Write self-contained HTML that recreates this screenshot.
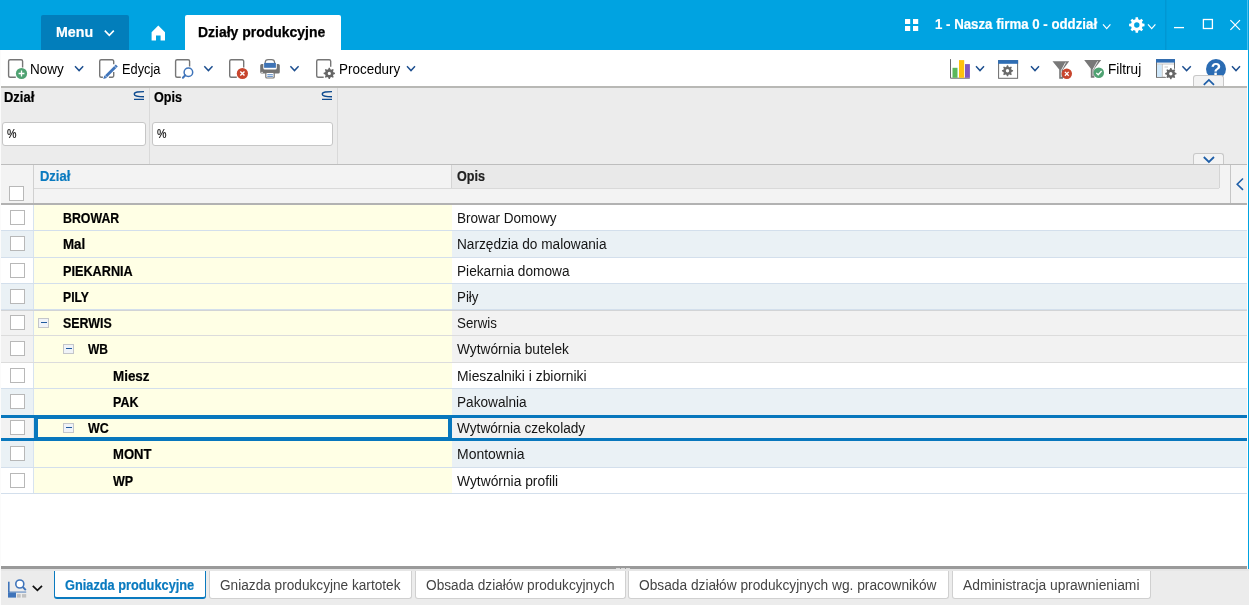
<!DOCTYPE html>
<html lang="pl">
<head>
<meta charset="utf-8">
<title>Działy produkcyjne</title>
<style>
*{box-sizing:border-box;margin:0;padding:0}
html,body{width:1249px;height:605px;overflow:hidden;background:#fff}
body{will-change:transform;position:relative;font-family:"Liberation Sans",sans-serif;font-size:13px;color:#000}
.abs{position:absolute}
#hdr{left:0;top:0;width:1249px;height:50px;background:#00a3e1}
#menu{left:41px;top:15px;width:88px;height:35px;background:#027ebb;border-radius:2px 2px 0 0;color:#fff;font-weight:bold;font-size:15px}
#menu span{-webkit-text-stroke:0.2px;position:absolute;left:14.7px;top:8px;white-space:nowrap}
#tab{left:185px;top:15px;width:156px;height:35px;background:#fff;border-radius:2px 2px 0 0;font-weight:bold;font-size:14px}
#tab span{-webkit-text-stroke:0.25px #000;position:absolute;left:13.4px;top:9px;white-space:nowrap}
#firm{-webkit-text-stroke:0.2px;left:935px;top:16px;color:#fff;font-weight:bold;font-size:14px;white-space:nowrap}
#tb{left:0;top:50px;width:1249px;height:36px;background:#fff}
#tbline{left:0;top:86px;width:1249px;height:2px;background:#b8b8b5}
.tbt{position:absolute;top:61px;font-size:14px;white-space:nowrap;color:#000}
#fp{left:0;top:88px;width:1249px;height:76px;background:#ececec}
#fpline{left:0;top:164px;width:1249px;height:1px;background:#bdbdbd}
.fl{position:absolute;top:89px;font-weight:bold;font-size:14px;-webkit-text-stroke:0.2px;white-space:nowrap}
.fi{position:absolute;top:122px;height:24px;background:#fff;border:1px solid #c6c6c6;border-radius:3px;font-size:13px;color:#000;-webkit-text-stroke:0.15px}
.fi span{position:absolute;left:4.2px;top:3.3px;display:inline-block;transform:scaleX(.82);transform-origin:0 0}
.vsep{position:absolute;top:88px;width:1px;height:76px;background:#d9d9d9}
.sub{position:absolute;top:90px}
#gh{left:0;top:165px;width:1249px;height:39px;background:#f3f3f3}
#ghline{left:0;top:203px;width:1249px;height:2px;background:#b2b2b2}
.cb{position:absolute;width:15px;height:15px;background:#fff;border:1px solid #b8b8b8}
.row{position:absolute;left:0;width:1249px;height:26px}
.row .c0{position:absolute;left:0;top:0;width:34px;height:100%;border-right:1px solid #d7e3f0}
.row .c1{position:absolute;left:34px;top:0;width:418px;height:100%;background:#ffffe5;font-weight:bold;font-size:14px;-webkit-text-stroke:0.2px}
.row .c2{position:absolute;left:452px;top:0;width:797px;height:100%;font-size:14px}
.row .c1 span,.row .c2 span{position:absolute;top:5px;white-space:nowrap}
.row .c2 span{left:4.8px;top:5px;color:#151515}
.rl{position:absolute;left:0;width:1249px;height:1px;background:#d3dfec}
.w .c0,.w .c2{background:#fff}
.b .c0,.b .c2{background:#eaf1f5}
.g .c0,.g .c2{background:#f2f2f2}
.exp{position:absolute;width:11px;height:10px;border:1px solid #c4c6ca;background:#f0f3f8}
.exp:after{content:"";position:absolute;left:2px;top:3px;width:6px;height:1px;background:#1f5a9e}
#bb{left:0;top:569px;width:1249px;height:36px;background:#ececec}
#bbline{left:0;top:566px;width:1249px;height:3px;background:#9a9a9a}
.bt{position:absolute;top:571px;height:28px;background:#fff;border:1px solid #d0d0d0;border-top:none;border-radius:0 0 3px 3px;font-size:14px;color:#444;white-space:nowrap}
.bt span{position:absolute;left:10px;top:6px}
.bt.act{border:1px solid #0a7abf;border-top:none;border-bottom-width:2px;color:#0a7abf;font-weight:bold;font-size:14px;-webkit-text-stroke:0.2px}
.bt.act span{top:6px}
.ctab{position:absolute;left:1193px;width:31px;height:11px;background:#f3f3f3;border:1px solid #c8c8c8;border-bottom:none;border-radius:3px 3px 0 0}
</style>
</head>
<body>
<div id="hdr" class="abs"></div>
<div id="menu" class="abs"><span style="display:inline-block;transform-origin:0 0;transform:scaleX(0.9471)">Menu</span></div>
<div id="tab" class="abs"><span style="display:inline-block;transform-origin:0 0;transform:scaleX(0.9969)">Działy produkcyjne</span></div>
<div id="firm" class="abs" style="display:inline-block;transform-origin:0 0;transform:scaleX(0.947)">1 - Nasza firma 0 - oddział</div>
<svg class="abs" style="left:0;top:0" width="1249" height="50" viewBox="0 0 1249 50"><path d="M104.80 30.60 L109.30 35.40 L113.80 30.60" fill="none" stroke="#fff" stroke-width="1.6"/>
<path d="M158.3 25.6 L165 32.2 V40.6 H160.6 V35.4 H156 V40.6 H151.6 V32.2 Z" fill="#fff"/>
<rect x="905" y="19" width="5.2" height="5" fill="#fff"/>
<rect x="913" y="19" width="5.2" height="5" fill="#fff"/>
<rect x="905" y="26" width="5.2" height="5" fill="#fff"/>
<rect x="913" y="26" width="5.2" height="5" fill="#fff"/>
<path d="M1103.00 24.40 L1106.70 28.60 L1110.40 24.40" fill="none" stroke="#fff" stroke-width="1.2"/>
<path d="M1142.54 23.62 L1144.50 23.78 L1144.50 26.22 L1142.54 26.38 L1141.83 28.08 L1143.11 29.58 L1141.38 31.31 L1139.88 30.03 L1138.18 30.74 L1138.02 32.70 L1135.58 32.70 L1135.42 30.74 L1133.72 30.03 L1132.22 31.31 L1130.49 29.58 L1131.77 28.08 L1131.06 26.38 L1129.10 26.22 L1129.10 23.78 L1131.06 23.62 L1131.77 21.92 L1130.49 20.42 L1132.22 18.69 L1133.72 19.97 L1135.42 19.26 L1135.58 17.30 L1138.02 17.30 L1138.18 19.26 L1139.88 19.97 L1141.38 18.69 L1143.11 20.42 L1141.83 21.92Z M1139.50 25.00 A2.7 2.7 0 1 0 1134.10 25.00 A2.7 2.7 0 1 0 1139.50 25.00Z" fill="#fff" fill-rule="evenodd"/>
<path d="M1148.00 24.40 L1151.70 28.60 L1155.40 24.40" fill="none" stroke="#fff" stroke-width="1.2"/>
<rect x="1165" y="0" width="1.5" height="50" fill="#0097d3"/>
<path d="M1174 27.6 H1184" stroke="#fff" stroke-width="1.3"/>
<rect x="1203.4" y="19.5" width="9" height="9" fill="none" stroke="#fff" stroke-width="1.3"/>
<path d="M1230.4 20.2 L1240 29.8 M1240 20.2 L1230.4 29.8" stroke="#fff" stroke-width="1.2"/></svg>
<div id="tb" class="abs"></div>
<div class="tbt" style="left:30px;display:inline-block;transform-origin:0 0;transform:scaleX(0.9653)">Nowy</div>
<div class="tbt" style="left:122px;display:inline-block;transform-origin:0 0;transform:scaleX(0.9136)">Edycja</div>
<div class="tbt" style="left:338.6px;display:inline-block;transform-origin:0 0;transform:scaleX(0.9606)">Procedury</div>
<div class="tbt" style="left:1107.7px;display:inline-block;transform-origin:0 0;transform:scaleX(0.9698)">Filtruj</div>
<svg class="abs" style="left:0;top:0" width="1249" height="90" viewBox="0 0 1249 90"><path d="M22.6 67.6 V61.25 a1.5 1.5 0 0 0 -1.5 -1.5 H10.1 a1.5 1.5 0 0 0 -1.5 1.5 V75.8 a1.5 1.5 0 0 0 1.5 1.5 H15.8" fill="none" stroke="#767676" stroke-width="1.4"/>
<circle cx="21.5" cy="73.5" r="5.6" fill="#4fa272"/><path d="M18.6 73.5 H24.4 M21.5 70.6 V76.4" stroke="#fff" stroke-width="1.3" fill="none"/>
<path d="M75.00 66.30 L79.10 70.60 L83.20 66.30" fill="none" stroke="#1c4e8f" stroke-width="1.45"/>
<path d="M113.7 64.2 V61.25 a1.5 1.5 0 0 0 -1.5 -1.5 H101.2 a1.5 1.5 0 0 0 -1.5 1.5 V75.8 a1.5 1.5 0 0 0 1.5 1.5 H102.9" fill="none" stroke="#767676" stroke-width="1.4"/>
<path d="M113.7 72.1 V75.8 a1.5 1.5 0 0 1 -1.5 1.5 H108.9" fill="none" stroke="#767676" stroke-width="1.4"/>
<path d="M103.3 78.9 L104.3 75.6 L106.6 77.9 Z" fill="#3f74ba"/><path d="M105.3 76.9 L116.8 65.4" stroke="#3f74ba" stroke-width="2.8" fill="none"/>
<path d="M104.6 75.0 L107.2 77.6 M114.0 65.6 L116.6 68.2" stroke="#fff" stroke-width="0.6" fill="none"/>
<path d="M189.6 66.6 V61.25 a1.5 1.5 0 0 0 -1.5 -1.5 H177.1 a1.5 1.5 0 0 0 -1.5 1.5 V75.8 a1.5 1.5 0 0 0 1.5 1.5 H180.8" fill="none" stroke="#767676" stroke-width="1.4"/>
<circle cx="188.4" cy="72.2" r="4.3" fill="#fff" stroke="#3f74ba" stroke-width="1.5"/><path d="M185.3 75.3 L182.9 77.7" stroke="#3f74ba" stroke-width="2" stroke-linecap="round"/>
<path d="M204.30 66.30 L208.40 70.60 L212.50 66.30" fill="none" stroke="#1c4e8f" stroke-width="1.45"/>
<path d="M243.7 67.6 V61.25 a1.5 1.5 0 0 0 -1.5 -1.5 H231.2 a1.5 1.5 0 0 0 -1.5 1.5 V75.8 a1.5 1.5 0 0 0 1.5 1.5 H236.8" fill="none" stroke="#767676" stroke-width="1.4"/>
<circle cx="242.4" cy="73.5" r="5.6" fill="#c8452d"/><path d="M240.3 71.4 L244.5 75.6 M244.5 71.4 L240.3 75.6" stroke="#fff" stroke-width="1.4" fill="none"/>
<path d="M265.2 63.2 V62.5 A3 3 0 0 1 268.2 59.6 H271.6 A3 3 0 0 1 274.6 62.5 V63.2" fill="#fff" stroke="#787878" stroke-width="1.2"/>
<path d="M261.7 64 H263.3 V68 a1.5 1.5 0 0 0 1.5 1.5 H275.3 a1.5 1.5 0 0 0 1.5 -1.5 V64 H278.3 a1.5 1.5 0 0 1 1.5 1.5 V72.1 a1.5 1.5 0 0 1 -1.5 1.5 H261.7 a1.5 1.5 0 0 1 -1.5 -1.5 V65.5 a1.5 1.5 0 0 1 1.5 -1.5 Z" fill="#727272"/>
<rect x="264.1" y="62.9" width="11.8" height="4.9" fill="#3e73b5"/>
<rect x="265.8" y="72.4" width="8.4" height="5.6" rx="1" fill="#fff" stroke="#757575" stroke-width="1.2"/>
<path d="M267.3 74.7 H272.9 M267.3 76.4 H272.9" stroke="#4a7fc1" stroke-width="0.9"/>
<rect x="261.3" y="71.9" width="1.5" height="0.9" fill="#fff"/>
<path d="M290.40 66.30 L294.50 70.60 L298.60 66.30" fill="none" stroke="#1c4e8f" stroke-width="1.45"/>
<path d="M330.7 66.7 V61.25 a1.5 1.5 0 0 0 -1.5 -1.5 H318.2 a1.5 1.5 0 0 0 -1.5 1.5 V75.8 a1.5 1.5 0 0 0 1.5 1.5 H323.7" fill="none" stroke="#767676" stroke-width="1.4"/>
<path d="M333.46 72.30 L334.97 72.82 L334.97 73.98 L333.46 74.50 L333.02 75.56 L333.72 77.00 L332.90 77.82 L331.46 77.12 L330.40 77.56 L329.88 79.07 L328.72 79.07 L328.20 77.56 L327.14 77.12 L325.70 77.82 L324.88 77.00 L325.58 75.56 L325.14 74.50 L323.63 73.98 L323.63 72.82 L325.14 72.30 L325.58 71.24 L324.88 69.80 L325.70 68.98 L327.14 69.68 L328.20 69.24 L328.72 67.73 L329.88 67.73 L330.40 69.24 L331.46 69.68 L332.90 68.98 L333.72 69.80 L333.02 71.24Z M330.90 73.40 A1.6 1.6 0 1 0 327.70 73.40 A1.6 1.6 0 1 0 330.90 73.40Z" fill="#666" fill-rule="evenodd"/>
<path d="M407.00 66.30 L411.00 70.60 L415.00 66.30" fill="none" stroke="#1c4e8f" stroke-width="1.45"/>
<path d="M950.5 59.1 V78.2 H969.8" fill="none" stroke="#6a6a6a" stroke-width="1"/>
<rect x="952.5" y="67.8" width="5" height="10" fill="#5cb85c"/><rect x="959" y="60.1" width="5.2" height="17.7" fill="#ffc20e"/><rect x="965" y="64.1" width="4.9" height="13.7" fill="#7e57c2"/>
<path d="M976.00 66.30 L980.00 70.60 L984.00 66.30" fill="none" stroke="#1c4e8f" stroke-width="1.45"/>
<rect x="998.6" y="60.6" width="19" height="17.7" fill="#fff" stroke="#6a6a6a" stroke-width="1"/><rect x="998.1" y="60.1" width="20" height="3.7" fill="#2e6db4"/>
<path d="M1011.56 69.72 L1013.07 70.23 L1013.07 71.37 L1011.56 71.88 L1011.13 72.91 L1011.84 74.34 L1011.04 75.14 L1009.61 74.43 L1008.58 74.86 L1008.07 76.37 L1006.93 76.37 L1006.42 74.86 L1005.39 74.43 L1003.96 75.14 L1003.16 74.34 L1003.87 72.91 L1003.44 71.88 L1001.93 71.37 L1001.93 70.23 L1003.44 69.72 L1003.87 68.69 L1003.16 67.26 L1003.96 66.46 L1005.39 67.17 L1006.42 66.74 L1006.93 65.23 L1008.07 65.23 L1008.58 66.74 L1009.61 67.17 L1011.04 66.46 L1011.84 67.26 L1011.13 68.69Z M1009.20 70.80 A1.7 1.7 0 1 0 1005.80 70.80 A1.7 1.7 0 1 0 1009.20 70.80Z" fill="#6a6a6a" fill-rule="evenodd"/>
<path d="M1031.00 66.30 L1035.00 70.60 L1039.00 66.30" fill="none" stroke="#1c4e8f" stroke-width="1.45"/>
<path d="M1052.5 61.3 H1069.2 L1063 69.5 V78.8 H1059.2 V69.5 Z" fill="#787878"/><path d="M1065.6 62.5 L1061.3 70.5 V77" stroke="#fff" stroke-width="0.8" fill="none"/>
<circle cx="1066.8" cy="73.8" r="5.2" fill="#c8452d"/><path d="M1064.9 71.9 L1068.7 75.7 M1068.7 71.9 L1064.9 75.7" stroke="#fff" stroke-width="1.3" fill="none"/>
<path d="M1084.2 60.1 H1101.2 L1094.4 68.8 V77.7 H1090.8 V68.8 Z" fill="#787878"/><path d="M1097.6 61.3 L1093 69.5 V76" stroke="#fff" stroke-width="0.8" fill="none"/>
<circle cx="1098.8" cy="72.7" r="5.25" fill="#4fa272"/><path d="M1096.3 72.9 L1098.2 74.8 L1101.6 71" stroke="#fff" stroke-width="1.3" fill="none"/>
<rect x="1156.5" y="59.6" width="18" height="17.7" fill="#fff" stroke="#6a6a6a" stroke-width="1"/><rect x="1156" y="59.1" width="19" height="3.5" fill="#2e6db4"/>
<rect x="1157" y="64.5" width="4.7" height="12.3" fill="#cfe8fb"/><path d="M1162.3 64 V77 M1157 64 H1174" stroke="#b5b5b5" stroke-width="0.8"/><path d="M1164.5 67 H1168" stroke="#c8c8c8" stroke-width="1"/>
<circle cx="1170.8" cy="73.7" r="6.3" fill="#fff"/>
<path d="M1174.96 72.60 L1176.47 73.12 L1176.47 74.28 L1174.96 74.80 L1174.52 75.86 L1175.22 77.30 L1174.40 78.12 L1172.96 77.42 L1171.90 77.86 L1171.38 79.37 L1170.22 79.37 L1169.70 77.86 L1168.64 77.42 L1167.20 78.12 L1166.38 77.30 L1167.08 75.86 L1166.64 74.80 L1165.13 74.28 L1165.13 73.12 L1166.64 72.60 L1167.08 71.54 L1166.38 70.10 L1167.20 69.28 L1168.64 69.98 L1169.70 69.54 L1170.22 68.03 L1171.38 68.03 L1171.90 69.54 L1172.96 69.98 L1174.40 69.28 L1175.22 70.10 L1174.52 71.54Z M1172.50 73.70 A1.7 1.7 0 1 0 1169.10 73.70 A1.7 1.7 0 1 0 1172.50 73.70Z" fill="#666" fill-rule="evenodd"/>
<path d="M1182.40 66.30 L1186.60 70.60 L1190.80 66.30" fill="none" stroke="#1c4e8f" stroke-width="1.45"/>
<circle cx="1216" cy="69" r="10" fill="#2b6cb3"/>
<text x="1216" y="75.2" text-anchor="middle" font-family="Liberation Sans, sans-serif" font-weight="bold" font-size="17" fill="#fff">?</text>
<path d="M1232.00 66.30 L1236.00 70.60 L1240.00 66.30" fill="none" stroke="#1c4e8f" stroke-width="1.45"/></svg>
<div class="ctab" style="top:75px"><svg class="abs" style="left:0;top:0" width="29" height="11" viewBox="0 0 29 11"><path d="M9.8 8.8 L14.9 3.9 L20 8.8" fill="none" stroke="#1f5fa8" stroke-width="1.8"/></svg></div>
<div id="tbline" class="abs"></div>
<div id="fp" class="abs"></div>
<div id="fpline" class="abs"></div>
<div class="ctab" style="top:153px"><svg class="abs" style="left:0;top:0" width="29" height="11" viewBox="0 0 29 11"><path d="M9.8 3 L14.9 7.9 L20 3" fill="none" stroke="#1f5fa8" stroke-width="1.8"/></svg></div>
<div class="vsep" style="left:149px"></div>
<div class="vsep" style="left:337px"></div>
<div class="fl" style="left:4.4px;display:inline-block;transform-origin:0 0;transform:scaleX(0.927)">Dział</div>
<div class="fl" style="left:154.4px;display:inline-block;transform-origin:0 0;transform:scaleX(0.8996)">Opis</div>
<svg class="sub" style="left:133px" width="12" height="11" viewBox="0 0 12 11"><path d="M11 1.6 C6 1.6 1.3 1.9 1.3 4.2 C1.3 6.4 6 6.7 11 6.7 M1 9.4 H11" fill="none" stroke="#0d4a8f" stroke-width="1.4"/></svg>
<svg class="sub" style="left:321.4px" width="12" height="11" viewBox="0 0 12 11"><path d="M11 1.6 C6 1.6 1.3 1.9 1.3 4.2 C1.3 6.4 6 6.7 11 6.7 M1 9.4 H11" fill="none" stroke="#0d4a8f" stroke-width="1.4"/></svg>
<div class="fi" style="left:2px;width:144px"><span>%</span></div>
<div class="fi" style="left:152px;width:181px"><span>%</span></div>
<div id="gh" class="abs"></div>
<div class="abs" style="left:452px;top:165px;width:767px;height:23px;background:#e9e9e9"></div>
<div class="abs" style="left:451px;top:165px;width:1px;height:23px;background:#d4d4d4"></div>
<div class="abs" style="left:1219px;top:165px;width:1px;height:23px;background:#d4d4d4"></div>
<div class="abs" style="left:1230px;top:165px;width:1px;height:38px;background:#c6c6c6"></div>
<svg class="abs" style="left:1234px;top:176px" width="12" height="16" viewBox="0 0 12 16"><path d="M9 2.5 L3.2 8.2 L9 13.9" fill="none" stroke="#1f5fa8" stroke-width="1.6"/></svg>
<div class="abs" style="left:33px;top:165px;width:1px;height:38px;background:#d0d0d0"></div>
<div class="abs" style="left:34px;top:188px;width:1185px;height:1px;background:#d9d9d9"></div>
<div id="ghline" class="abs"></div>
<div class="cb" style="left:9px;top:186px"></div>
<div class="abs" style="left:39.5px;top:168px;font-weight:bold;font-size:14px;-webkit-text-stroke:0.2px;color:#0a7abf;white-space:nowrap;display:inline-block;transform-origin:0 0;transform:scaleX(0.927)">Dział</div>
<div class="abs" style="left:457.3px;top:168px;font-weight:bold;font-size:14px;-webkit-text-stroke:0.2px;color:#222;white-space:nowrap;display:inline-block;transform-origin:0 0;transform:scaleX(0.8996)">Opis</div>
<div class="row w" style="top:205px;height:26px"><div class="c0"><div class="cb" style="left:10px;top:5px"></div></div><div class="c1"><span style="left:29.3px;display:inline-block;transform-origin:0 0;transform:scaleX(0.8819)">BROWAR</span></div><div class="c2"><span style="display:inline-block;transform-origin:0 0;transform:scaleX(0.9688)">Browar Domowy</span></div></div>
<div class="rl" style="top:230px;background:#d3dfec"></div>
<div class="row b" style="top:231px;height:27px"><div class="c0"><div class="cb" style="left:10px;top:5px"></div></div><div class="c1"><span style="left:29.3px;display:inline-block;transform-origin:0 0;transform:scaleX(0.9531)">Mal</span></div><div class="c2"><span style="display:inline-block;transform-origin:0 0;transform:scaleX(0.9751)">Narzędzia do malowania</span></div></div>
<div class="rl" style="top:257px;background:#d3dfec"></div>
<div class="row w" style="top:258px;height:26px"><div class="c0"><div class="cb" style="left:10px;top:5px"></div></div><div class="c1"><span style="left:29.3px;display:inline-block;transform-origin:0 0;transform:scaleX(0.9057)">PIEKARNIA</span></div><div class="c2"><span style="display:inline-block;transform-origin:0 0;transform:scaleX(0.9768)">Piekarnia domowa</span></div></div>
<div class="rl" style="top:283px;background:#d3dfec"></div>
<div class="row b" style="top:284px;height:26px"><div class="c0"><div class="cb" style="left:10px;top:5px"></div></div><div class="c1"><span style="left:29.3px;display:inline-block;transform-origin:0 0;transform:scaleX(0.8712)">PILY</span></div><div class="c2"><span style="display:inline-block;transform-origin:0 0;transform:scaleX(0.9529)">Piły</span></div></div>
<div class="rl" style="top:309px;background:#d3dfec"></div>
<div class="row g" style="top:310px;height:26px"><div class="c0"><div class="cb" style="left:10px;top:5px"></div></div><div class="c1"><div class="exp" style="left:4px;top:8px"></div><span style="left:29.3px;display:inline-block;transform-origin:0 0;transform:scaleX(0.8866)">SERWIS</span></div><div class="c2"><span style="display:inline-block;transform-origin:0 0;transform:scaleX(0.952)">Serwis</span></div></div>
<div class="rl" style="top:335px;background:#dcdcdc"></div>
<div class="row g" style="top:336px;height:27px"><div class="c0"><div class="cb" style="left:10px;top:5px"></div></div><div class="c1"><div class="exp" style="left:29px;top:8px"></div><span style="left:54.3px;display:inline-block;transform-origin:0 0;transform:scaleX(0.8573)">WB</span></div><div class="c2"><span style="display:inline-block;transform-origin:0 0;transform:scaleX(0.9793)">Wytwórnia butelek</span></div></div>
<div class="rl" style="top:362px;background:#dcdcdc"></div>
<div class="row w" style="top:363px;height:26px"><div class="c0"><div class="cb" style="left:10px;top:5px"></div></div><div class="c1"><span style="left:79.3px;display:inline-block;transform-origin:0 0;transform:scaleX(0.9574)">Miesz</span></div><div class="c2"><span style="display:inline-block;transform-origin:0 0;transform:scaleX(0.9916)">Mieszalniki i zbiorniki</span></div></div>
<div class="rl" style="top:388px;background:#d3dfec"></div>
<div class="row b" style="top:389px;height:26px"><div class="c0"><div class="cb" style="left:10px;top:5px"></div></div><div class="c1"><span style="left:79.3px;display:inline-block;transform-origin:0 0;transform:scaleX(0.8938)">PAK</span></div><div class="c2"><span style="display:inline-block;transform-origin:0 0;transform:scaleX(0.9733)">Pakowalnia</span></div></div>
<div class="row g" style="top:415px;height:26px"><div class="c0"><div class="cb" style="left:10px;top:5px"></div></div><div class="c1"><div class="exp" style="left:29px;top:8px"></div><span style="left:54.3px;display:inline-block;transform-origin:0 0;transform:scaleX(0.8895)">WC</span></div><div class="c2"><span style="display:inline-block;transform-origin:0 0;transform:scaleX(0.9758)">Wytwórnia czekolady</span></div></div>
<div class="row b" style="top:441px;height:27px"><div class="c0"><div class="cb" style="left:10px;top:5px"></div></div><div class="c1"><span style="left:79.3px;display:inline-block;transform-origin:0 0;transform:scaleX(0.934)">MONT</span></div><div class="c2"><span style="display:inline-block;transform-origin:0 0;transform:scaleX(0.997)">Montownia</span></div></div>
<div class="rl" style="top:467px;background:#d3dfec"></div>
<div class="row w" style="top:468px;height:26px"><div class="c0"><div class="cb" style="left:10px;top:5px"></div></div><div class="c1"><span style="left:79.3px;display:inline-block;transform-origin:0 0;transform:scaleX(0.8975)">WP</span></div><div class="c2"><span style="display:inline-block;transform-origin:0 0;transform:scaleX(0.9866)">Wytwórnia profili</span></div></div>
<div class="rl" style="top:493px"></div>
<div class="rl" style="top:310px;background:#d2d4d6"></div>
<div class="abs" style="left:0;top:415px;width:1249px;height:3px;background:#0877bd"></div>
<div class="abs" style="left:0;top:438px;width:1249px;height:3px;background:#0877bd"></div>
<div class="abs" style="left:34px;top:415px;width:418px;height:26px;border:4px solid #0877bd"></div>
<div id="bbline" class="abs"></div>
<div id="bb" class="abs"></div>
<div class="abs" style="left:0;top:569px;width:1249px;height:2px;background:#e6e6e6"></div>
<div class="abs" style="left:616px;top:568px;width:4px;height:1px;background:#dadada"></div><div class="abs" style="left:621px;top:568px;width:4px;height:1px;background:#dadada"></div><div class="abs" style="left:626px;top:568px;width:4px;height:1px;background:#dadada"></div>
<div class="bt act" style="left:54px;width:152px"><span style="display:inline-block;transform-origin:0 0;transform:scaleX(0.9125)">Gniazda produkcyjne</span></div>
<div class="bt" style="left:209px;width:203px"><span style="display:inline-block;transform-origin:0 0;transform:scaleX(0.9745)">Gniazda produkcyjne kartotek</span></div>
<div class="bt" style="left:415px;width:211px"><span style="display:inline-block;transform-origin:0 0;transform:scaleX(0.9767)">Obsada działów produkcyjnych</span></div>
<div class="bt" style="left:628px;width:321px"><span style="display:inline-block;transform-origin:0 0;transform:scaleX(0.9803)">Obsada działów produkcyjnych wg. pracowników</span></div>
<div class="bt" style="left:952px;width:199px"><span style="display:inline-block;transform-origin:0 0;transform:scaleX(0.9905)">Administracja uprawnieniami</span></div>
<svg class="abs" style="left:6px;top:577px" width="40" height="24" viewBox="0 0 40 24"><rect x="2" y="4.7" width="1.6" height="10.8" fill="#3f74ba"/><rect x="2" y="14.6" width="18.2" height="0.9" fill="#3f74ba"/><rect x="2" y="15.5" width="8" height="5.1" fill="#3f74ba"/><rect x="11" y="17.1" width="3.7" height="3.5" fill="#c2c2c2"/><rect x="16" y="17.1" width="4.2" height="3.5" fill="#c2c2c2"/><circle cx="13.8" cy="7" r="4" fill="#fff" stroke="#3f74ba" stroke-width="1.6"/><path d="M16.8 10 L19.8 13.2" stroke="#3f74ba" stroke-width="1.9"/><path d="M26.8 8.8 L31.4 13.4 L36 8.8" fill="none" stroke="#111" stroke-width="1.7"/></svg>
<div class="abs" style="left:1247px;top:50px;width:1px;height:519px;background:#fff"></div>
<div class="abs" style="left:0;top:50px;width:1px;height:555px;background:#fbfbfb"></div>
<div class="abs" style="left:1247px;top:0;width:1px;height:50px;background:#4fc0ec"></div>
<div class="abs" style="left:1248px;top:0;width:1px;height:569px;background:#00a3e1"></div>
</body>
</html>
